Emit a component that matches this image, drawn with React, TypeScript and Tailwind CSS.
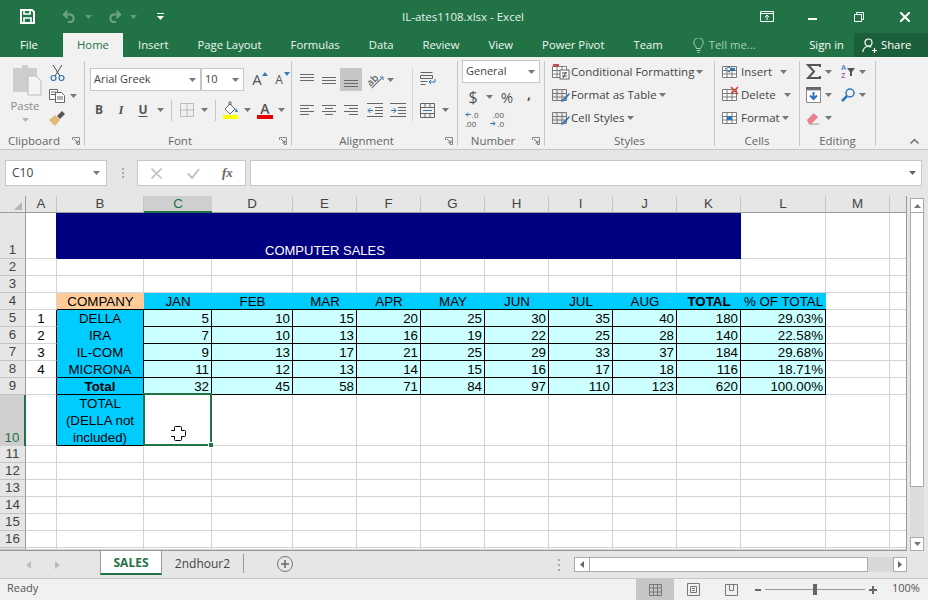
import React from "react";

const ui = "font-['Open_Sans',sans-serif]";
const sheetFont = "font-['Liberation_Sans',Arial,sans-serif]";

const headers = ["A", "B", "C", "D", "E", "F", "G", "H", "I", "J", "K", "L", "M", ""];
const months = ["JAN", "FEB", "MAR", "APR", "MAY", "JUN", "JUL", "AUG"];
const companies = [
    { no: "1", name: "DELLA", vals: ["5", "10", "15", "20", "25", "30", "35", "40", "180", "29.03%"] },
    { no: "2", name: "IRA", vals: ["7", "10", "13", "16", "19", "22", "25", "28", "140", "22.58%"] },
    { no: "3", name: "IL-COM", vals: ["9", "13", "17", "21", "25", "29", "33", "37", "184", "29.68%"] },
    { no: "4", name: "MICRONA", vals: ["11", "12", "13", "14", "15", "16", "17", "18", "116", "18.71%"] },
];
const totals = ["32", "45", "58", "71", "84", "97", "110", "123", "620", "100.00%"];

const grid = "border-r border-b border-[#d4d4d4]";

function Caret({ color = "#777" }: { color?: string }) {
    return (
        <svg width="7" height="4" viewBox="0 0 7 4">
            <path d="M0 0h7L3.500 4z" fill={color} />
        </svg>
    );
}

function CaretBtn({ w = 10 }: { w?: number }) {
    return (
        <span className="flex items-center justify-center shrink-0" style={{ width: w }}>
            <Caret />
        </span>
    );
}

function Launcher() {
    return (
        <svg width="8" height="8" viewBox="0 0 8 8" fill="none" stroke="#8a8a8a">
            <path d="M.5 3V.5H7.500V7.500H5" />
            <path d="M2 2l4 4M6 3.500V6H3.500" stroke="#6a6a6a" />
        </svg>
    );
}

function Group({
    w,
    label,
    launcher,
    children,
}: {
    w: number;
    label: string;
    launcher?: boolean;
    children: React.ReactNode;
}) {
    return (
        <div className="mt-1 h-[85px] shrink-0 border-r border-[#c6c6c6]" style={{ width: w }}>
            <div className="flex h-[71px] flex-col">{children}</div>
            <div className="flex h-[18px] items-center">
                <span className="flex-1 text-center text-[11.5px] text-[#666]">{label}</span>
                {launcher && (
                    <span className="flex w-4 justify-center">
                        <Launcher />
                    </span>
                )}
            </div>
        </div>
    );
}

function Lines({ rows, color = "#6a6a6a" }: { rows: number[][]; color?: string }) {
    return (
        <svg width="16" height="14" viewBox="0 0 16 14" stroke={color} fill="none">
            {rows.map(([a, b, y], i) => (
                <path key={i} d={`M${a} ${y + 0.5}H${b}`} />
            ))}
        </svg>
    );
}

function Cell22({ children, className = "" }: { children: React.ReactNode; className?: string }) {
    return <span className={`flex h-full w-[22px] shrink-0 items-center justify-center ${className}`}>{children}</span>;
}

function GridIcon({ fill = "#fff" }: { fill?: string }) {
    return (
        <g stroke="#7a7a7a" fill={fill}>
            <path d="M.5 3.500h14v11H.5zM.5 7.500h14M.5 11h14M5 3.500v11M10 3.500v11" />
        </g>
    );
}

function Brush() {
    return <path d="M9 16c1-3 3-4 4-5l4-4 1 1-4 5c-1 1-3 3-5 3z" fill="#3c78b4" />;
}

function Save() {
    return (
        <svg width="15" height="15" viewBox="0 0 15 15" fill="none" stroke="#fff" strokeWidth="2">
            <path d="M1 1h11l2 2v11H1z" />
            <path d="M4 1v4h6V1M4 14V9h7v5" strokeWidth="1.600" />
        </svg>
    );
}

function Undo({ flip }: { flip?: boolean }) {
    return (
        <svg width="15" height="13" viewBox="0 0 15 13" fill="none" stroke="#6aa386" strokeWidth="2" className={flip ? "-scale-x-100" : ""}>
            <path d="M5.500 1 1.800 4.500 5.500 8" />
            <path d="M2 4.500h7a4 4 0 0 1 0 7.500H6" />
        </svg>
    );
}

function TitleBar() {
    return (
        <div className="flex h-[33px] shrink-0 items-center bg-[#217346] text-white">
            <span className="ml-5 flex w-[15px]">
                <Save />
            </span>
            <span className="ml-[27px] flex w-[15px]">
                <Undo />
            </span>
            <span className="ml-[8px] flex w-[7px]">
                <Caret color="#5f9c7d" />
            </span>
            <span className="ml-[15px] flex w-[15px]">
                <Undo flip />
            </span>
            <span className="ml-[8px] flex w-[7px]">
                <Caret color="#5f9c7d" />
            </span>
            <svg className="ml-[20px]" width="7" height="8" viewBox="0 0 7 8" fill="#fff">
                <path d="M0 0h7v1H0zM0 3h7L3.500 7z" />
            </svg>
            <span className="ml-[224px] w-[150px] whitespace-nowrap text-center text-[11.5px] text-[#e6f2ec]">IL-ates1108.xlsx - Excel</span>
            <div className="ml-auto flex items-center">
                <svg width="14" height="11" viewBox="0 0 14 11" fill="none" stroke="#fff">
                    <path d="M.5.500h13v10H.5zM.5 2.500h13" />
                    <path d="M7 9V4M4.800 6.200 7 4l2.200 2.200" />
                </svg>
                <span className="ml-[34px] h-[2px] w-[9px] translate-y-[2px] bg-white" />
                <svg className="ml-[37px]" width="10" height="10" viewBox="0 0 10 10" fill="none" stroke="#fff">
                    <path d="M.5 2.500h7v7h-7zM2.500 2.500v-2h7v7h-2" />
                </svg>
                <svg className="ml-[36px] mr-[18px]" width="10" height="10" viewBox="0 0 10 10" fill="none" stroke="#fff" strokeWidth="2">
                    <path d="M0 0l10 10M10 0 0 10" />
                </svg>
            </div>
        </div>
    );
}

function TabBar() {
    const tabs = ["Insert", "Page Layout", "Formulas", "Data", "Review", "View", "Power Pivot", "Team"];
    return (
        <div className="flex h-[24px] shrink-0 bg-[#217346] text-[11.3px] leading-[24px] text-[#eef6f1]">
            <span className="ml-5 w-[43px] text-white">File</span>
            <span className="w-[60px] bg-[#f1f1f1] text-center text-[#217346]">Home</span>
            <span className="flex pl-[15px]">
                {tabs.map((t) => (
                    <span key={t} className="mr-[29px] whitespace-nowrap">
                        {t}
                    </span>
                ))}
            </span>
            <svg className="mt-[5px] ml-[1px]" width="11" height="15" viewBox="0 0 11 15" fill="none" stroke="#a9d1bb">
                <path d="M3.500 10.500C3 8 .8 7 .8 4.500a4.700 4.700 0 0 1 9.400 0C10.200 7 8 8 7.500 10.500zM3.500 12.500h4M4.500 14.500h2" />
            </svg>
            <span className="ml-[5px] whitespace-nowrap text-[#a9d1bb]">Tell me...</span>
            <span className="ml-auto whitespace-nowrap text-white">Sign in</span>
            <span className="ml-[10px] flex w-[74px] items-center bg-[#1b5f3a] pl-2 text-white">
                <svg width="15" height="15" viewBox="0 0 15 15" fill="none" stroke="#fff" strokeWidth="1.200">
                    <circle cx="6.500" cy="4.500" r="3.500" />
                    <path d="M.8 14c.4-3.500 2.700-5.500 5.700-5.500 1 0 2 .3 2.800.8M10 12.500h5M12.500 10v5" />
                </svg>
                <span className="ml-1">Share</span>
            </span>
        </div>
    );
}

function ClipboardGroup() {
    return (
        <Group w={85} label="Clipboard" launcher>
            <div className="flex">
                <div className="flex w-[48px] flex-col items-center pl-[6px]">
                    <svg className="mt-[3px]" width="29" height="32" viewBox="0 0 29 32">
                        <path d="M0 4h9V1h6v3h9v24H0z" fill="#cdcdcd" />
                        <path d="M15 12h8l5 5v14H15z" fill="#f4f4f4" stroke="#bdbdbd" />
                    </svg>
                    <span className="-translate-x-[2px] text-[11.3px] leading-[20px] text-[#8a8a8a]">Paste</span>
                    <span className="mt-[2px] flex -translate-x-[2px]">
                        <Caret color="#b5b5b5" />
                    </span>
                </div>
                <div className="flex flex-col">
                    <div className="flex h-[23px] items-center">
                        <span className="flex w-[18px] justify-center">
                            <svg width="15" height="16" viewBox="0 0 15 16" fill="none" stroke="#4a4a4a">
                                <path d="M3 0l7 11M12 0 5 11" />
                                <circle cx="3.500" cy="13" r="2.500" stroke="#2e75b6" strokeWidth="1.200" />
                                <circle cx="11.500" cy="13" r="2.500" stroke="#2e75b6" strokeWidth="1.200" />
                            </svg>
                        </span>
                    </div>
                    <div className="flex h-[23px] items-center">
                        <span className="flex w-[18px] justify-center">
                            <svg width="16" height="14" viewBox="0 0 16 14" fill="#fff" stroke="#666">
                                <path d="M.5.500h8v10h-8zM2 3h5M2 5.500h5" />
                                <path d="M6.500 3.500h6l3 3v7h-9zM8 8h6M8 10h6" />
                            </svg>
                        </span>
                        <CaretBtn w={14} />
                    </div>
                    <div className="flex h-[23px] items-center">
                        <span className="flex w-[18px] justify-center">
                            <svg width="16" height="15" viewBox="0 0 16 15">
                                <path d="M0 9 6 4l5 5-5 6z" fill="#e0b878" />
                                <path d="M8 5 13 0l3 3-5 5z" fill="#555" />
                            </svg>
                        </span>
                    </div>
                </div>
            </div>
        </Group>
    );
}

function Combo({ w, text, className = "" }: { w: number; text: string; className?: string }) {
    return (
        <span
            className={`flex h-[23px] shrink-0 items-center justify-between border border-[#c6c6c6] bg-white pl-[3px] pr-[4px] text-[11px] text-[#444] ${className}`}
            style={{ width: w }}
        >
            <span className="whitespace-nowrap">{text}</span>
            <Caret />
        </span>
    );
}

function FontGroup() {
    return (
        <Group w={207} label="Font" launcher>
            <div className="flex h-[30px] items-start pl-[5px] pt-[7px]">
                <Combo w={111} text="Arial Greek" />
                <Combo w={43} text="10" />
                <span className="relative ml-[2px] flex h-[23px] w-[22px] items-center justify-center text-[15px] text-[#555]">
                    A
                    <svg className="absolute right-0 top-[4px]" width="6" height="4" viewBox="0 0 6 4">
                        <path d="M0 4 3 0l3 4z" fill="#3c78b4" />
                    </svg>
                </span>
                <span className="relative flex h-[23px] w-[22px] items-center justify-center text-[12px] text-[#555]">
                    A
                    <svg className="absolute right-0 top-[4px]" width="6" height="4" viewBox="0 0 6 4">
                        <path d="M0 0h6L3 4z" fill="#3c78b4" />
                    </svg>
                </span>
            </div>
            <div className="ml-[3px] mt-[8px] flex h-[22px] items-center text-[#555]">
                <Cell22>
                    <b className="text-[12px]">B</b>
                </Cell22>
                <Cell22>
                    <i className="font-['Liberation_Serif',serif] text-[13px] font-bold">I</i>
                </Cell22>
                <Cell22>
                    <b className="text-[12px] underline underline-offset-2">U</b>
                </Cell22>
                <CaretBtn w={12} />
                <span className="mx-[4.500px] h-[21px] w-px shrink-0 bg-[#c6c6c6]" />
                <Cell22>
                    <svg width="14" height="14" viewBox="0 0 14 14" fill="none" stroke="#8a8a8a" strokeDasharray="1 1">
                        <path d="M.5.500h13v13H.5zM.5 7h13M7 .5v13" />
                    </svg>
                </Cell22>
                <CaretBtn w={12} />
                <span className="mx-[4.500px] h-[21px] w-px shrink-0 bg-[#c6c6c6]" />
                <Cell22>
                    <svg width="16" height="18" viewBox="0 0 16 18">
                        <path d="M2 8 7 3l5 5-5 5z" fill="#fff" stroke="#666" />
                        <path d="M6 4V1h2v3" fill="none" stroke="#666" />
                        <path d="M13 7l2 4h-3z" fill="#3c78b4" />
                        <rect y="14" width="15" height="4" fill="#ffff00" />
                    </svg>
                </Cell22>
                <CaretBtn w={10} />
                <span className="w-[2px]" />
                <Cell22>
                    <span className="flex flex-col items-center">
                        <span className="text-[14px] font-semibold leading-[13px]">A</span>
                        <span className="h-[4px] w-[16px] bg-[#e60000]" />
                    </span>
                </Cell22>
                <CaretBtn w={10} />
            </div>
        </Group>
    );
}

function AlignmentGroup() {
    return (
        <Group w={166} label="Alignment" launcher>
            <div className="flex h-[60px] pt-[7px]">
                <div className="w-[121px] shrink-0 border-r border-[#d4d4d4] pl-[4px]">
                    <div className="flex h-[23px] items-center">
                        <Cell22>
                            <Lines rows={[[1, 15, 1], [1, 15, 4], [1, 15, 7]]} />
                        </Cell22>
                        <Cell22>
                            <Lines rows={[[1, 15, 4], [1, 15, 7], [1, 15, 10]]} />
                        </Cell22>
                        <Cell22 className="bg-[#c6c6c6]">
                            <Lines rows={[[1, 15, 7], [1, 15, 10], [1, 15, 13]]} />
                        </Cell22>
                        <Cell22 className="ml-[2px]">
                            <span className="flex items-center">
                                <span className="-rotate-45 text-[10px] font-semibold leading-[10px] text-[#666] underline">ab</span>
                                <svg width="6" height="7" viewBox="0 0 6 7" fill="none" stroke="#3c78b4">
                                    <path d="M0 6l5-5M2 1h3v3" />
                                </svg>
                            </span>
                        </Cell22>
                        <CaretBtn w={8} />
                    </div>
                    <div className="mt-[8px] flex h-[22px] items-center">
                        <Cell22>
                            <Lines rows={[[1, 15, 2], [1, 10, 5], [1, 15, 8], [1, 10, 11]]} />
                        </Cell22>
                        <Cell22>
                            <Lines rows={[[1, 15, 2], [4, 12, 5], [1, 15, 8], [4, 12, 11]]} />
                        </Cell22>
                        <Cell22>
                            <Lines rows={[[1, 15, 2], [6, 15, 5], [1, 15, 8], [6, 15, 11]]} />
                        </Cell22>
                        <Cell22 className="ml-[2px]">
                            <svg width="16" height="14" viewBox="0 0 16 14" fill="none" stroke="#666">
                                <path d="M0 .5h16M8 4.500h8M8 7.500h8M8 10.500h8M0 13.500h16" />
                                <path d="M6 7.500H1M3.500 5 1 7.500 3.500 10" stroke="#2e75b6" />
                            </svg>
                        </Cell22>
                        <Cell22 className="ml-px">
                            <svg width="16" height="14" viewBox="0 0 16 14" fill="none" stroke="#666">
                                <path d="M0 .5h16M8 4.500h8M8 7.500h8M8 10.500h8M0 13.500h16" />
                                <path d="M1 7.500h5M3.500 5 6 7.500 3.500 10" stroke="#2e75b6" />
                            </svg>
                        </Cell22>
                    </div>
                </div>
                <div className="pl-[7px]">
                    <div className="flex h-[23px] items-center">
                        <svg width="16" height="16" viewBox="0 0 16 16" fill="none" stroke="#666">
                            <path d="M.5.500h12M.5 3.500h12v3H.5zM.5 9.500h7M.5 12.500h5" />
                            <path d="M15 7v3h-6M11 8l-2 2 2 2" stroke="#2e75b6" />
                        </svg>
                    </div>
                    <div className="mt-[8px] flex h-[22px] items-center">
                        <svg width="15" height="15" viewBox="0 0 15 15" fill="none" stroke="#666">
                            <path d="M.5.500h14v14H.5zM.5 4.500h14M.5 10.500h14M5 .5v4M10 .5v4M5 10.500v4M10 10.500v4" />
                            <path d="M3 7.500h9" stroke="#2e75b6" />
                        </svg>
                        <span className="w-[7px]" />
                        <Caret />
                    </div>
                </div>
            </div>
        </Group>
    );
}

function DecArrow({ flip }: { flip?: boolean }) {
    return (
        <svg className={`mr-px ${flip ? "-scale-x-100" : ""}`} width="6" height="5" viewBox="0 0 6 5" fill="none" stroke="#2e75b6">
            <path d="M6 2.500H1M3 .5l-2 2 2 2" />
        </svg>
    );
}

function NumberGroup() {
    return (
        <Group w={87} label="Number" launcher>
            <div className="pl-[4px]">
                <div className="-mt-px">
                    <Combo w={78} text="General" />
                </div>
                <div className="mt-[3px] flex h-[22px] items-center text-[#555]">
                    <span className="w-[22px] text-center text-[16px]">$</span>
                    <CaretBtn w={10} />
                    <span className="ml-[1px] w-[24px] text-center text-[15px]">%</span>
                    <span className="ml-[2px] w-[16px] -translate-y-1 text-center text-[14px] font-bold">,</span>
                </div>
                <div className="flex h-[22px] items-center text-[#555]">
                    <span className="ml-[3px] flex w-[19px] flex-col text-[8px] leading-[9px]">
                        <span className="flex items-center">
                            <DecArrow />
                            .0
                        </span>
                        <span>.00</span>
                    </span>
                    <span className="ml-[1px] flex w-[19px] flex-col items-end text-[8px] leading-[9px]">
                        <span>.00</span>
                        <span className="flex items-center">
                            <DecArrow flip />
                            .0
                        </span>
                    </span>
                </div>
            </div>
        </Group>
    );
}

function StyleIcon({ kind }: { kind: "cond" | "table" | "cell" }) {
    return (
        <svg width="18" height="17" viewBox="0 0 18 17">
            <GridIcon fill={kind === "cond" ? "#fff" : "#e8e8e8"} />
            {kind === "cond" ? (
                <>
                    <rect x="1" y="1" width="6" height="3" fill="#c0504d" />
                    <rect x="8" y="7" width="9" height="9" fill="#fff" stroke="#666" />
                    <path d="M10 10h5M10 13h5M14 9l-3 6" stroke="#444" fill="none" />
                </>
            ) : (
                <Brush />
            )}
        </svg>
    );
}

function StyleRow({ kind, text }: { kind: "cond" | "table" | "cell"; text: string }) {
    return (
        <div className="flex h-[23px] items-center">
            <StyleIcon kind={kind} />
            <span className="ml-[1px] whitespace-nowrap text-[11.5px] text-[#444]">{text}</span>
            <span className="ml-[2px] flex">
                <Caret />
            </span>
        </div>
    );
}

function CellRow({ icon, text, caret }: { icon: React.ReactNode; text: string; caret: number }) {
    return (
        <div className="flex h-[23px] items-center">
            <svg width="17" height="17" viewBox="0 0 17 17">
                <GridIcon />
                {icon}
            </svg>
            <span className="ml-[2px] text-[11.5px] text-[#444]" style={{ width: caret }}>
                {text}
            </span>
            <Caret />
        </div>
    );
}

function EditRow({ a, b }: { a: React.ReactNode; b?: React.ReactNode }) {
    return (
        <div className="flex h-[23px] items-center pl-[6px]">
            <span className="flex w-[15px] justify-center">{a}</span>
            <CaretBtn w={15} />
            {b && (
                <>
                    <span className="ml-[3px] flex w-[18px] justify-center">{b}</span>
                    <CaretBtn w={10} />
                </>
            )}
        </div>
    );
}

function Ribbon() {
    return (
        <div className={`flex h-[93px] shrink-0 border-b border-[#c6c6c6] bg-[#f1f1f1] ${ui}`}>
            <ClipboardGroup />
            <FontGroup />
            <AlignmentGroup />
            <NumberGroup />
            <Group w={170} label="Styles">
                <div className="-mt-px pl-[7px]">
                    <StyleRow kind="cond" text="Conditional Formatting" />
                    <StyleRow kind="table" text="Format as Table" />
                    <StyleRow kind="cell" text="Cell Styles" />
                </div>
            </Group>
            <Group w={85} label="Cells">
                <div className="-mt-px pl-[7px]">
                    <CellRow text="Insert" caret={39} icon={<path d="M3 5h10v3H3zM8 3 3 6.500 8 10" fill="#2e75b6" />} />
                    <CellRow text="Delete" caret={43} icon={<path d="M9 1l7 7M16 1 9 8" stroke="#d04437" strokeWidth="1.600" fill="none" />} />
                    <CellRow text="Format" caret={41} icon={<rect x="5" y="7" width="5" height="4" fill="#2e75b6" />} />
                </div>
            </Group>
            <Group w={76} label="Editing">
                <div className="-mt-px">
                    <EditRow
                        a={
                            <svg width="15" height="15" viewBox="0 0 15 15" fill="none" stroke="#555" strokeWidth="2">
                                <path d="M14 3V1H2l6 6.500L2 14h12v-2" />
                            </svg>
                        }
                        b={
                            <span className="flex items-center">
                                <span className="flex flex-col text-[7px] font-semibold leading-[8px]">
                                    <span className="text-[#2e75b6]">A</span>
                                    <span className="text-[#a64d9e]">Z</span>
                                </span>
                                <svg className="ml-px" width="8" height="8" viewBox="0 0 8 8">
                                    <path d="M0 0h8L5 4v4H3V4z" fill="#555" />
                                </svg>
                            </span>
                        }
                    />
                    <EditRow
                        a={
                            <svg width="15" height="16" viewBox="0 0 15 16" fill="none">
                                <path d="M0 0h15v3H0z" fill="#666" />
                                <path d="M.5 3h14v12.500H.5z" stroke="#888" fill="#fff" />
                                <path d="M7.500 5v7M4 8.500l3.500 3.500L11 8.500" stroke="#2e75b6" strokeWidth="2" />
                            </svg>
                        }
                        b={
                            <svg width="14" height="14" viewBox="0 0 14 14" fill="none" stroke="#2e75b6">
                                <circle cx="9" cy="5" r="4" strokeWidth="1.500" />
                                <path d="M6 8l-5 5" strokeWidth="2.500" />
                            </svg>
                        }
                    />
                    <EditRow
                        a={
                            <svg width="16" height="14" viewBox="0 0 16 14">
                                <path d="M1 9l7-7 5 4-7 7H3z" fill="#e8828e" />
                                <path d="M3 13.500h11" stroke="#999" />
                            </svg>
                        }
                    />
                </div>
            </Group>
            <div className="flex flex-1 items-end justify-end pb-[5px] pr-[9px]">
                <svg width="9" height="6" viewBox="0 0 9 6" fill="none" stroke="#6a6a6a" strokeWidth="1.500">
                    <path d="M.5 5.500l4-4 4 4" />
                </svg>
            </div>
        </div>
    );
}

function FormulaBar() {
    return (
        <div className={`flex h-[46px] shrink-0 items-start bg-[#e6e6e6] pt-[10px] ${ui}`}>
            <span className="ml-[5px] flex h-[26px] w-[102px] items-center justify-between border border-[#c6c6c6] bg-white px-[6px] text-[12px] text-[#444]">
                C10
                <Caret />
            </span>
            <span className="ml-[14px] flex h-[26px] w-[3px] flex-col items-center justify-center gap-[2px]">
                <span className="h-[2px] w-[2px] bg-[#aaa]" />
                <span className="h-[2px] w-[2px] bg-[#aaa]" />
                <span className="h-[2px] w-[2px] bg-[#aaa]" />
            </span>
            <span className="ml-[13px] flex h-[26px] w-[109px] items-center border border-[#c6c6c6] bg-white">
                <svg className="ml-[13px]" width="11" height="11" viewBox="0 0 11 11" fill="none" stroke="#c2c2c2" strokeWidth="1.600">
                    <path d="M.5.500l10 10M10.500.5l-10 10" />
                </svg>
                <svg className="ml-[25px]" width="13" height="11" viewBox="0 0 13 11" fill="none" stroke="#c2c2c2" strokeWidth="2">
                    <path d="M1 5.500 5 10l7-9" />
                </svg>
                <span className="ml-[22px] font-['Liberation_Serif',serif] text-[13px] font-bold italic text-[#666]">fx</span>
            </span>
            <span className="ml-[4px] flex h-[26px] w-[672px] items-center justify-end border border-[#c6c6c6] bg-white pr-[5px]">
                <Caret color="#666" />
            </span>
        </div>
    );
}

function RowHead({ n, active }: { n?: number; active?: boolean }) {
    return (
        <div
            className={`flex items-end justify-center leading-[17px] ${
                active
                    ? "border-r-2 border-[#217346] bg-[#cfcfcf] text-[#217346]"
                    : "border-r border-b border-r-[#9a9a9a] border-b-[#c4c4c4] bg-[#e6e6e6] text-[#444]"
            }`}
        >
            {n}
        </div>
    );
}

function Num({ value }: { value: string }) {
    return <div className="border-r border-b border-black bg-[#ccffff] pr-[2px] text-right leading-[17px] text-black">{value}</div>;
}

function EmptyRow({ n }: { n?: number }) {
    return (
        <>
            <RowHead n={n} />
            {headers.map((h, i) => (
                <div key={i} className={grid} />
            ))}
        </>
    );
}

function Sheet() {
    return (
        <div
            className={`grid h-[354px] w-[906px] grid-cols-[26px_31px_87px_68px_81px_repeat(7,64px)_85px_64px_17px] grid-rows-[17px_46px_repeat(8,17px)_51px_repeat(6,17px)] overflow-hidden bg-white text-[13.330px] text-black ${sheetFont}`}
        >
            {/* column letters */}
            <div className="flex items-end justify-end border-r border-b border-[#9a9a9a] bg-[#e6e6e6] pb-[2px] pr-[3px]">
                <svg width="8" height="8" viewBox="0 0 8 8">
                    <path d="M8 0v8H0z" fill="#b4b4b4" />
                </svg>
            </div>
            {headers.map((h, i) => (
                <div
                    key={i}
                    className={`text-center leading-[16px] ${
                        h === "C"
                            ? "border-b-2 border-[#217346] bg-[#cfcfcf] text-[#217346]"
                            : h === ""
                              ? "border-b border-b-[#9a9a9a] bg-[#e6e6e6]"
                              : "border-r border-b border-r-[#c4c4c4] border-b-[#9a9a9a] bg-[#e6e6e6] text-[#444]"
                    }`}
                >
                    {h}
                </div>
            ))}

            {/* row 1 */}
            <RowHead n={1} />
            <div className="border-r border-b border-r-[#000080] border-b-[#d4d4d4]" />
            <div className="col-span-10 flex items-end bg-[#000080] pl-[208px] text-[13px] leading-[17px] text-white">COMPUTER SALES</div>
            <div className={grid} />
            <div className={grid} />
            <div className={grid} />

            <EmptyRow n={2} />
            <EmptyRow n={3} />

            {/* row 4 */}
            <RowHead n={4} />
            <div className={grid} />
            <div className="border-b border-black bg-[#ffcc99] text-center leading-[17px]">COMPANY</div>
            {months.map((m) => (
                <div key={m} className="border-b border-black bg-[#00ccff] text-center leading-[17px]">
                    {m}
                </div>
            ))}
            <div className="border-b border-black bg-[#00ccff] text-center font-bold leading-[17px]">TOTAL</div>
            <div className="border-b border-black bg-[#00ccff] text-center leading-[17px]">% OF TOTAL</div>
            <div className={grid} />
            <div className={grid} />

            {/* rows 5-8 */}
            {companies.map((c, r) => (
                <React.Fragment key={c.name}>
                    <RowHead n={r + 5} />
                    <div className="border-r border-b border-r-black border-b-[#d4d4d4] text-center leading-[17px]">{c.no}</div>
                    <div className={`border-r border-r-black bg-[#00ccff] text-center leading-[17px] ${r === 3 ? "border-b border-b-black" : ""}`}>
                        {c.name}
                    </div>
                    {c.vals.map((v, i) => (
                        <Num key={i} value={v} />
                    ))}
                    <div className={grid} />
                    <div className={grid} />
                </React.Fragment>
            ))}

            {/* row 9 */}
            <RowHead n={9} />
            <div className="border-r border-b border-r-black border-b-[#d4d4d4]" />
            <div className="border-r border-b border-black bg-[#00ccff] text-center font-bold leading-[17px]">Total</div>
            {totals.map((v, i) => (
                <Num key={i} value={v} />
            ))}
            <div className={grid} />
            <div className={grid} />

            {/* row 10 */}
            <RowHead n={10} active />
            <div className="border-r border-b border-r-black border-b-[#d4d4d4]" />
            <div className="border-r border-b border-black bg-[#00ccff] text-center leading-[17px]">
                TOTAL
                <br />
                (DELLA not
                <br />
                included)
            </div>
            <div className="relative border-r border-b border-[#d4d4d4]">
                <div className="absolute -bottom-px -left-px -right-px -top-[2px] border-2 border-[#217346]" />
                <div className="absolute -bottom-[3px] -right-[3px] h-[6px] w-[6px] border border-white bg-[#217346]" />
                <svg className="absolute left-[27px] top-[31px]" width="15" height="15" viewBox="0 0 15 15">
                    <path d="M4.500.5h5a1 1 0 0 1 1 1v3h3a1 1 0 0 1 1 1v4a1 1 0 0 1-1 1h-3v3a1 1 0 0 1-1 1h-5a1 1 0 0 1-1-1v-3h-3a1 1 0 0 1-1-1v-4a1 1 0 0 1 1-1h3v-3a1 1 0 0 1 1-1z" fill="#fff" stroke="#000" />
                </svg>
            </div>
            {headers.slice(3).map((h, i) => (
                <div key={i} className={grid} />
            ))}

            {[11, 12, 13, 14, 15, 16].map((n) => (
                <EmptyRow key={n} n={n} />
            ))}
            <EmptyRow />
        </div>
    );
}

function ScrollBtn({ children, className = "" }: { children: React.ReactNode; className?: string }) {
    return <span className={`flex shrink-0 items-center justify-center border border-[#ababab] bg-white ${className}`}>{children}</span>;
}

function VScroll() {
    return (
        <div className="flex h-[355px] w-[21px] flex-col bg-[#e6e6e6] px-[3px] pt-[2px]">
            <ScrollBtn className="h-[14px] w-[14px] border-b-0">
                <svg width="7" height="4" viewBox="0 0 7 4">
                    <path d="M0 4h7L3.500 0z" fill="#777" />
                </svg>
            </ScrollBtn>
            <span className="h-[275px] w-[14px] shrink-0 border border-[#ababab] bg-white" />
            <span className="w-[14px] flex-1 bg-[#dcdcdc]" />
            <ScrollBtn className="h-[14px] w-[14px]">
                <Caret />
            </ScrollBtn>
        </div>
    );
}

function SheetTabs() {
    return (
        <div className={`flex h-[27px] shrink-0 bg-[#e6e6e6] text-[12px] ${ui}`}>
            <span className="ml-[26px] flex w-[8px] items-center">
                <svg width="5" height="8" viewBox="0 0 5 8">
                    <path d="M5 0v8L0 4z" fill="#bcbcbc" />
                </svg>
            </span>
            <span className="ml-[21px] flex w-[45px] items-center">
                <svg width="5" height="8" viewBox="0 0 5 8">
                    <path d="M0 0v8l5-4z" fill="#bcbcbc" />
                </svg>
            </span>
            <span className="flex h-[24px] w-[62px] items-center justify-center border-x border-b-[2px] border-x-[#9a9a9a] border-b-[#217346] bg-white pt-px font-bold text-[#217346]">
                SALES
            </span>
            <span className="flex h-[24px] w-[81px] items-center justify-center pt-[2px] text-[#444]">2ndhour2</span>
            <span className="mt-[3px] h-[19px] w-px bg-[#9a9a9a]" />
            <span className="ml-[33px] mt-[5px] flex h-[16px] w-[16px] items-center justify-center rounded-full border border-[#777]">
                <svg width="8" height="8" viewBox="0 0 8 8" stroke="#666" strokeWidth="1.500">
                    <path d="M4 0v8M0 4h8" />
                </svg>
            </span>
            <span className="ml-[265px] mt-[8px] flex h-[12px] flex-col justify-between">
                <span className="h-[2px] w-[2px] bg-[#aaa]" />
                <span className="h-[2px] w-[2px] bg-[#aaa]" />
                <span className="h-[2px] w-[2px] bg-[#aaa]" />
            </span>
            <span className="ml-[14px] mt-[6px] flex h-[15px] w-[333px]">
                <ScrollBtn className="w-[15px] border-r-0">
                    <svg width="4" height="7" viewBox="0 0 4 7">
                        <path d="M4 0v7L0 3.500z" fill="#666" />
                    </svg>
                </ScrollBtn>
                <span className="w-[279px] border border-[#ababab] bg-white" />
                <span className="flex-1 bg-[#d8d8d8]" />
                <ScrollBtn className="w-[14px]">
                    <svg width="4" height="7" viewBox="0 0 4 7">
                        <path d="M0 0v7l4-3.500z" fill="#666" />
                    </svg>
                </ScrollBtn>
            </span>
        </div>
    );
}

function StatusBar() {
    return (
        <div className={`flex h-[22px] shrink-0 items-center border-t border-[#c6c6c6] bg-[#f1f1f1] text-[11px] text-[#555] ${ui}`}>
            <span className="ml-[7px] w-[629px] -translate-y-px">Ready</span>
            <span className="flex h-full w-[38px] items-center justify-center bg-[#c6c6c6]">
                <svg width="13" height="12" viewBox="0 0 13 12" fill="none" stroke="#777">
                    <path d="M.5.500h12v11H.5zM.5 4h12M.5 8h12M4.500.5v11M8.500.5v11" />
                </svg>
            </span>
            <span className="flex w-[38px] justify-center">
                <svg width="13" height="13" viewBox="0 0 13 13" fill="none" stroke="#777">
                    <path d="M.5.500h12v12H.5zM3.500 3.500h6v6h-6zM5 5.500h3M5 7.500h3" />
                </svg>
            </span>
            <span className="flex w-[38px] justify-center">
                <svg width="13" height="12" viewBox="0 0 13 12" fill="none" stroke="#777">
                    <path d="M.5.500h12v11H.5zM4.500.5v6h4v-6" />
                </svg>
            </span>
            <span className="ml-[5px] h-[2px] w-[6px] bg-[#666]" />
            <span className="relative ml-[4px] h-px w-[100px] bg-[#999]">
                <span className="absolute left-[48px] -top-[5px] h-[11px] w-[4px] bg-[#666]" />
            </span>
            <svg className="ml-[4px]" width="8" height="8" viewBox="0 0 8 8" stroke="#666" strokeWidth="2">
                <path d="M4 0v8M0 4h8" />
            </svg>
            <span className="ml-[15px] -translate-y-px">100%</span>
        </div>
    );
}

export default function App() {
    return (
        <div className={`flex h-[600px] w-[928px] flex-col overflow-hidden bg-[#e6e6e6] ${ui}`}>
            <TitleBar />
            <TabBar />
            <Ribbon />
            <FormulaBar />
            <div className="flex h-[355px] shrink-0">
                <div className="h-[355px] w-[907px] border-r border-b border-[#9a9a9a]">
                    <Sheet />
                </div>
                <VScroll />
            </div>
            <SheetTabs />
            <StatusBar />
        </div>
    );
}
